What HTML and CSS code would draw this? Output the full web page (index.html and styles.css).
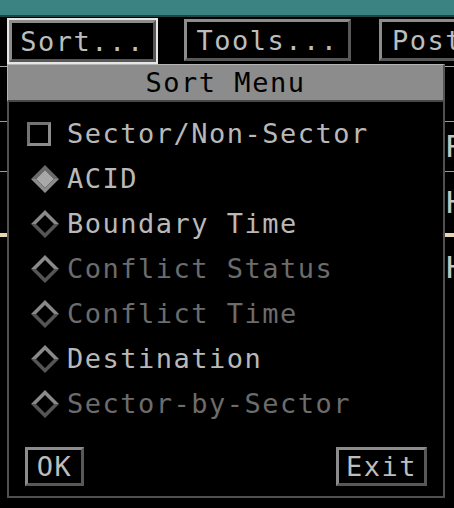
FILE: index.html
```html
<!DOCTYPE html>
<html>
<head>
<meta charset="utf-8">
<link rel="stylesheet" href="styles.css">
</head>
<body>
<div class="screen">
  <div class="topbar"></div>
  <div class="toolbar">
    <div class="focus"><div class="btn btn-sort">Sort...</div></div>
    <div class="btn btn-tools">Tools...</div>
    <div class="btn btn-post">Post...</div>
  </div>
  <div class="table">
    <div class="trow r1"></div>
    <div class="trow r2"><span class="cell">R</span></div>
    <div class="trow r3"><span class="cell">H</span></div>
    <div class="trow r4"><span class="cell">H</span></div>
  </div>

  <div class="menu">
    <div class="menu-title">Sort Menu</div>
    <div class="menu-body">
      <ul class="items">
        <li class="item">
          <span class="ind"><span class="check"></span></span>
          <span class="label">Sector/Non-Sector</span>
        </li>
        <li class="item">
          <span class="ind"><svg class="diamond" viewBox="0 0 28 28" width="28" height="28"><polygon class="d-top sel" points="0,14 14,0 28,14 23,14 14,5 5,14"/><polygon class="d-bot sel" points="0,14 14,28 28,14 23,14 14,23 5,14"/><polygon class="d-fill" points="5,14 14,5 23,14 14,23"/></svg></span>
          <span class="label">ACID</span>
        </li>
        <li class="item">
          <span class="ind"><svg class="diamond" viewBox="0 0 28 28" width="28" height="28"><polygon class="d-top" points="0,14 14,0 28,14 23,14 14,5 5,14"/><polygon class="d-bot" points="0,14 14,28 28,14 23,14 14,23 5,14"/></svg></span>
          <span class="label">Boundary Time</span>
        </li>
        <li class="item off">
          <span class="ind"><svg class="diamond" viewBox="0 0 28 28" width="28" height="28"><polygon class="d-top" points="0,14 14,0 28,14 23,14 14,5 5,14"/><polygon class="d-bot" points="0,14 14,28 28,14 23,14 14,23 5,14"/></svg></span>
          <span class="label">Conflict Status</span>
        </li>
        <li class="item off">
          <span class="ind"><svg class="diamond" viewBox="0 0 28 28" width="28" height="28"><polygon class="d-top" points="0,14 14,0 28,14 23,14 14,5 5,14"/><polygon class="d-bot" points="0,14 14,28 28,14 23,14 14,23 5,14"/></svg></span>
          <span class="label">Conflict Time</span>
        </li>
        <li class="item">
          <span class="ind"><svg class="diamond" viewBox="0 0 28 28" width="28" height="28"><polygon class="d-top" points="0,14 14,0 28,14 23,14 14,5 5,14"/><polygon class="d-bot" points="0,14 14,28 28,14 23,14 14,23 5,14"/></svg></span>
          <span class="label">Destination</span>
        </li>
        <li class="item off">
          <span class="ind"><svg class="diamond" viewBox="0 0 28 28" width="28" height="28"><polygon class="d-top" points="0,14 14,0 28,14 23,14 14,5 5,14"/><polygon class="d-bot" points="0,14 14,28 28,14 23,14 14,23 5,14"/></svg></span>
          <span class="label">Sector-by-Sector</span>
        </li>
      </ul>
      <div class="actions">
        <div class="btn btn-ok">OK</div>
        <div class="btn btn-exit">Exit</div>
      </div>
    </div>
  </div>
</div>
</body>
</html>
```
FILE: styles.css
```css
html, body {
  margin: 0;
  padding: 0;
  background: #000;
}
.screen {
  position: relative;
  width: 454px;
  height: 508px;
  overflow: hidden;
  background: #000;
  font-family: "DejaVu Sans Mono", "Liberation Mono", monospace;
  font-size: 27px;
  letter-spacing: 1.5px;
  color: #b9b9b9;
}
.topbar {
  height: 15px;
  background: #3b8383;
  border-bottom: 2px solid #1d4545;
}
.toolbar {
  display: flex;
  align-items: flex-start;
  padding: 1px 0 0 7px;
  height: 48px;
  white-space: nowrap;
}
.focus {
  border: 2px solid #e6e6e6;
  width: 147px;
  height: 42px;
}
.btn {
  box-sizing: border-box;
  display: flex;
  align-items: center;
  justify-content: center;
  border: 3px solid;
  border-color: #8c8c8c #585858 #585858 #8c8c8c;
  background: #000;
  color: #bdbdbd;
  line-height: 1;
}
.btn-sort {
  width: 147px;
  height: 42px;
}
.btn-tools {
  margin: 1px 0 0 26px;
  width: 167px;
  height: 42px;
  flex: none;
}
.btn-post {
  margin: 1px 0 0 28px;
  width: 150px;
  height: 42px;
  flex: none;
  justify-content: flex-start;
  padding-left: 10px;
}
.table {
  border-top: 1px solid #a6a6a6;
}
.trow {
  position: relative;
  display: flex;
  align-items: center;
  justify-content: flex-end;
}
.r1 { height: 54px; border-bottom: 1px solid #9a9a9a; }
.r2 { height: 49px; border-bottom: 1px solid #9a9a9a; }
.r3 { height: 61px; border-bottom: 4px solid #e6d6b4; }
.r4 { height: 60px; }
.cell {
  width: 9px;
  overflow: hidden;
  font-family: "DejaVu Sans", sans-serif;
  font-size: 31px;
  letter-spacing: 0;
  color: #c4c4c4;
  line-height: 1;
}
.menu {
  position: absolute;
  left: 7px;
  top: 64px;
  width: 438px;
}
.menu-title {
  box-sizing: border-box;
  height: 38px;
  background: #8c8c8c;
  border-top: 1px solid #b4b4b4;
  border-left: 1px solid #b4b4b4;
  border-right: 2px solid #555;
  border-bottom: 2px solid #474747;
  color: #000;
  display: flex;
  align-items: center;
  justify-content: center;
  line-height: 1;
}
.menu-body {
  box-sizing: border-box;
  height: 396px;
  border: 2px solid #505050;
  border-top: 0;
  background: #000;
  padding: 9px 0 10px;
  display: flex;
  flex-direction: column;
}
.items {
  list-style: none;
  margin: 0;
  padding: 0;
}
.item {
  height: 45px;
  display: flex;
  align-items: center;
  line-height: 1;
}
.item.off .label {
  color: #6c6c6c;
}
.ind {
  display: flex;
  align-items: center;
  width: 40px;
  margin-left: 18px;
  height: 28px;
}
.check {
  box-sizing: border-box;
  width: 24px;
  height: 24px;
  border: 3px solid;
  border-color: #737373 #8c8c8c #8c8c8c #737373;
}
.diamond {
  margin-left: 4px;
  display: block;
}
.d-top { fill: #8a8a8a; }
.d-bot { fill: #555; }
.d-top.sel { fill: #6a6a6a; }
.d-bot.sel { fill: #8c8c8c; }
.d-fill { fill: #a8a8a8; }
.label {
  color: #b9b9b9;
  white-space: nowrap;
}
.actions {
  margin-top: 21px;
  display: flex;
  justify-content: space-between;
  padding: 0 16px;
}
.btn-ok {
  width: 59px;
  height: 39px;
}
.btn-exit {
  width: 91px;
  height: 39px;
}
```
